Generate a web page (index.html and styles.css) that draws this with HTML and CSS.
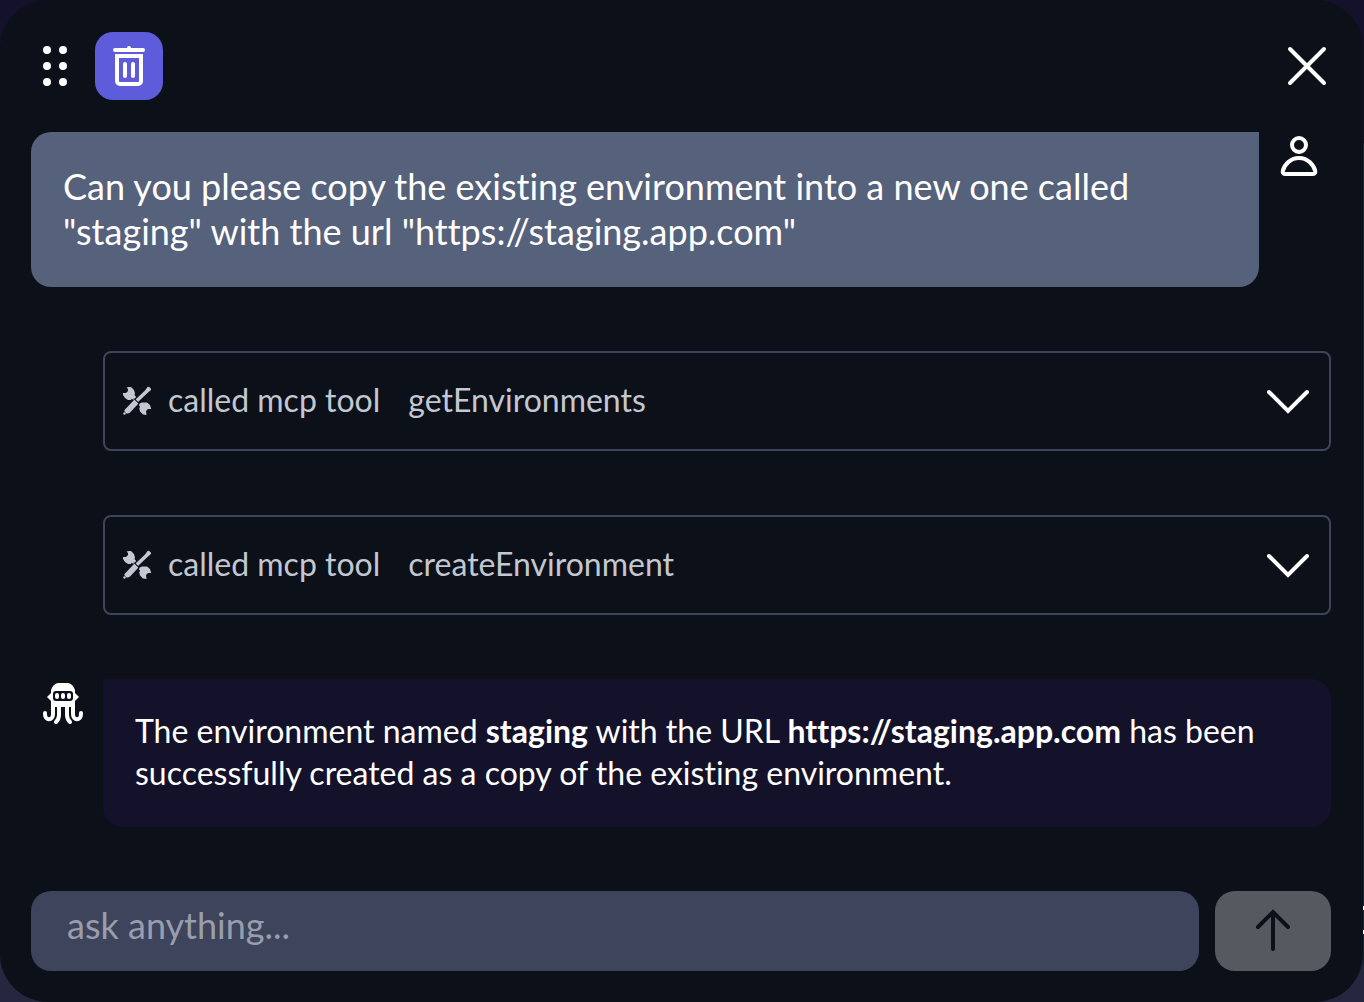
FILE: index.html
```html
<!DOCTYPE html>
<html lang="en">
<head>
<meta charset="utf-8">
<meta name="viewport" content="width=device-width, initial-scale=1">
<title>Assistant chat</title>
<link rel="stylesheet" href="styles.css">
</head>
<body>
<svg class="sprite" aria-hidden="true">
  <symbol id="tools" viewBox="0 0 30 30">
    <path d="M4.500 1.500 7 1h2l3 3 1 3.500-.5 1.500 1.700 2-2.700 2.700-2-1L9 14H6L3 12 1 9V7h3l2-2V3Z"/>
    <path d="m17.500 17.500 2.500-1h5l3 2.500 1.200 4H26l-2 2 .5 4-3.500-.5-3-3-.7-3 .7-2-1-1Z"/>
    <path d="m12.500 13.500 4 4L8 26.500l-2 1H4.500L2.500 25.500V24Z"/>
    <path d="m13.500 13.500 9.500-9L25.500 1 27 .7l2 2V4L25.500 7l-9.500 9Z"/>
    <circle cx="2.500" cy="27.500" r="1.200"/>
    <path class="tools-gap" d="m12 12.500 5.500 5.500"/>
  </symbol>
</svg>
<main class="panel">
  <header class="toolbar">
    <button class="icon-button" type="button" aria-label="Move">
      <svg width="26" height="42" viewBox="0 0 26 42" fill="currentColor"><circle cx="5" cy="5" r="4"/><circle cx="21" cy="5" r="4"/><circle cx="5" cy="21" r="4"/><circle cx="21" cy="21" r="4"/><circle cx="5" cy="37" r="4"/><circle cx="21" cy="37" r="4"/></svg>
    </button>
    <button class="icon-button delete" type="button" aria-label="Clear conversation">
      <svg width="34" height="42" viewBox="0 0 34 42" fill="none" stroke="currentColor" stroke-width="4" stroke-linecap="round"><path d="M3 5h28"/><path d="M5 11h24v25a3 3 0 0 1-3 3H8a3 3 0 0 1-3-3Z"/><path d="M13 19v12M21 19v12"/><circle cx="17" cy="3" r="2" fill="currentColor" stroke="none"/></svg>
    </button>
    <button class="icon-button close" type="button" aria-label="Close">
      <svg width="40" height="40" viewBox="0 0 40 40" fill="none" stroke="currentColor" stroke-width="4" stroke-linecap="round"><path d="m3 3 34 34M37 3 3 37"/></svg>
    </button>
  </header>
  <section class="thread">
    <article class="message">
      <p class="bubble question">Can you please copy the existing environment into a new one called "staging" with the url "https://staging.app.com"</p>
      <div class="avatar user">
        <svg width="40" height="40" viewBox="0 0 40 40" fill="none" stroke="currentColor" stroke-width="4"><circle cx="20" cy="9" r="7"/><path d="M6 38h28c2 0 2.500-1.500 2.200-3C34.500 28 28 22 20 22S5.500 28 3.800 35c-.3 1.500.2 3 2.200 3Z"/></svg>
      </div>
    </article>
    <button class="tool-call" type="button" aria-expanded="false">
      <svg class="tool-icon" width="30" height="30"><use href="#tools"/></svg>
      <span class="tool-label">called mcp tool</span>
      <span class="tool-name">getEnvironments</span>
      <svg class="chevron" width="44" height="28" viewBox="0 0 44 28"><path d="m3 5 19 19L41 5"/></svg>
    </button>
    <button class="tool-call" type="button" aria-expanded="false">
      <svg class="tool-icon" width="30" height="30"><use href="#tools"/></svg>
      <span class="tool-label">called mcp tool</span>
      <span class="tool-name">createEnvironment</span>
      <svg class="chevron" width="44" height="28" viewBox="0 0 44 28"><path d="m3 5 19 19L41 5"/></svg>
    </button>
    <article class="message">
      <div class="avatar agent">
        <svg width="40" height="42" viewBox="0 0 40 42" fill="none">
          <path fill="currentColor" d="M15 0h10q5 1 7 7v3l4 4-4 4v6H8v-6l-4-4 4-4V7q2-6 7-7Z"/>
          <rect x="10" y="8" width="20" height="10" rx="3" fill="#0c1019"/>
          <path stroke="currentColor" stroke-width="4" stroke-linecap="round" d="M14 12v2M20 12v2M26 12v2"/>
          <path stroke="currentColor" stroke-width="4" stroke-linecap="round" d="M10 22v9c0 7-8 7-8 0v-1M30 22v9c0 7 8 7 8 0v-1M16 22v10c0 4-1 5-3 7M24 22v10c0 4 1 5 3 7"/>
        </svg>
      </div>
      <p class="bubble answer">The environment named <strong>staging</strong> with the URL <strong>https://staging.app.com</strong> has been successfully created as a copy of the existing environment.</p>
    </article>
  </section>
  <form class="composer">
    <input class="prompt" type="text" placeholder="ask anything..." aria-label="Ask anything">
    <button class="send" type="submit" aria-label="Send">
      <svg width="36" height="44" viewBox="0 0 36 44" fill="none" stroke="currentColor" stroke-width="4" stroke-linecap="round"><path d="M18 40V4M3 18 18 3l15 15"/></svg>
    </button>
  </form>
</main>
<div class="edge" aria-hidden="true"><i></i><i></i></div>
</body>
</html>
```
FILE: styles.css
```css
* { box-sizing: border-box; }
body {
  margin: 0;
  min-height: 100vh;
  background: linear-gradient(#14122b 50%, #25273e 50%);
  color: #fff;
  font-family: Lato, "Liberation Sans", sans-serif;
  font-variant-ligatures: none;
}
button, input { font: inherit; color: inherit; border: 0; }
svg { display: block; flex: none; }
.sprite { position: absolute; width: 0; height: 0; }
.panel {
  display: flex;
  flex-direction: column;
  gap: 32px;
  min-height: 100vh;
  margin-right: 1px;
  padding: 32px 32px 31px 31px;
  border-radius: 48px;
  background: #0c1019;
}
.toolbar { display: flex; align-items: center; }
.icon-button {
  display: flex;
  align-items: center;
  justify-content: center;
  padding: 0;
  background: none;
}
.toolbar .icon-button:first-child { width: 48px; }
.delete {
  width: 68px;
  height: 68px;
  margin-left: 16px;
  border-radius: 18px;
  background: #5e5cdb;
}
.close { width: 48px; height: 48px; margin-left: auto; }
.thread { display: flex; flex-direction: column; gap: 64px; }
.message { display: flex; }
.avatar { flex: none; width: 72px; }
.user { padding: 4px 12px 0 20px; }
.agent { padding: 4px 20px 0 12px; }
.bubble { flex: 1; margin: 0; }
.question {
  padding: 32px 32px 33px;
  border-radius: 20px 0 20px 20px;
  background: #56617b;
  font-size: 36px;
  line-height: 45px;
}
.answer {
  padding: 31px 32px 33px;
  border-radius: 0 20px 20px 20px;
  background: #14122a;
  font-size: 32px;
  line-height: 42px;
}
.tool-call {
  display: flex;
  align-items: center;
  height: 100px;
  margin-left: 72px;
  padding: 0 19px 0 17px;
  border: 2px solid #3d445c;
  border-radius: 8px;
  background: none;
  color: #c3c7d1;
  font-size: 32px;
  text-align: left;
}
.tool-icon { margin-right: 16px; fill: currentColor; }
.tools-gap { stroke: #0c1019; stroke-width: 1; }
.tool-label { margin-right: 28px; }
.tool-label, .tool-name { padding-bottom: 4px; }
.chevron {
  margin-left: auto;
  fill: none;
  stroke: #fff;
  stroke-width: 4;
  stroke-linecap: round;
}
.composer { display: flex; gap: 16px; margin-top: 32px; }
.prompt {
  flex: 1;
  min-width: 0;
  height: 80px;
  padding: 0 36px 12px;
  border-radius: 20px;
  background: #3d445c;
  font-size: 36px;
}
.prompt::placeholder { color: #999dac; opacity: 1; }
.send {
  display: flex;
  align-items: center;
  justify-content: center;
  width: 116px;
  height: 80px;
  border-radius: 20px;
  background: #575960;
  color: #0c1019;
}
/* Sliver of the neighbouring pane along the right side */
.edge {
  position: absolute;
  right: 0;
  bottom: 36px;
  top: 143px;
  display: flex;
  flex-direction: column;
  justify-content: flex-end;
  gap: 20px;
  width: 1px;
  padding-bottom: 32px;
  background: #1c2033;
}
.edge i { height: 4px; background: #fff; }
```
